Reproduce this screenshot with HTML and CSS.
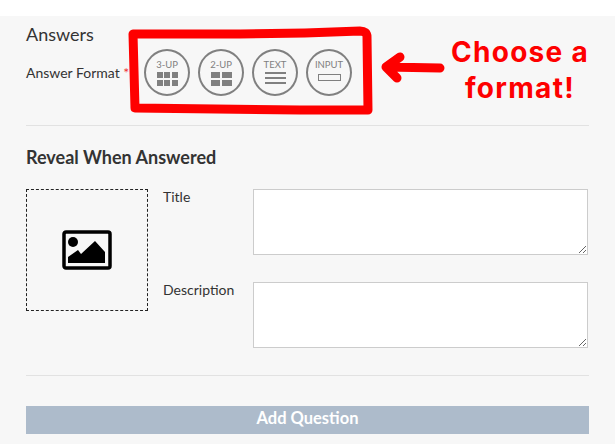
FILE: index.html
```html
<!DOCTYPE html>
<html>
<head>
  <title>Reveal When Answered</title>
  <link rel="stylesheet" href="styles.css">
</head>
<body>
  <div class="form">
    <h2 class="titulo-answers">Answers</h2>
    <div class="linha-formato">
      <label class="label-formato">Answer Format <span class="obrigatorio">*</span></label>
      <div class="formatos">
        <div class="formato">
          <span>3-UP</span>
          <div class="blocos tres"><i></i><i></i><i></i><i></i><i></i><i></i></div>
        </div>
        <div class="formato">
          <span>2-UP</span>
          <div class="blocos dois"><i></i><i></i><i></i><i></i></div>
        </div>
        <div class="formato">
          <span>TEXT</span>
          <div class="linhas"><i></i><i></i><i></i></div>
        </div>
        <div class="formato">
          <span>INPUT</span>
          <div class="campo"></div>
        </div>
      </div>
    </div>

    <hr class="divisor">

    <h3 class="titulo-reveal">Reveal When Answered</h3>
    <div class="reveal">
      <div class="caixa-imagem">
        <svg width="50" height="40" viewBox="0 0 50 40">
          <rect x="2" y="2" width="46" height="36" rx="2" fill="none" stroke="#000" stroke-width="3.5"/>
          <circle cx="11" cy="12" r="5"/>
          <polygon points="6,33 6,27 16,20 19,24 33,11 43,22 43,33"/>
        </svg>
      </div>
      <div class="campos">
        <label>Title</label>
        <textarea></textarea>
        <label>Description</label>
        <textarea></textarea>
      </div>
    </div>

    <hr class="divisor segundo">

    <button class="botao-add">Add Question</button>
  </div>

  <!-- Anotacao em vermelho por cima da tela -->
  <svg class="anotacao" width="615" height="444" viewBox="0 0 615 444">
    <path d="M133 34 L240 34 L305 33 L360 31 Q367 31 367 37 L368 110 L300 110 L135 108 Z" fill="none" stroke="#fe0000" stroke-width="9" stroke-linejoin="round"/>
    <path d="M440 68 L386 67 M400 57 L386 67 L397 78" fill="none" stroke="#fe0000" stroke-width="9" stroke-linecap="round" stroke-linejoin="round"/>
  </svg>
  <div class="aviso">Choose a<br>format!</div>
</body>
</html>
```

FILE: styles.css
```css
* {
  box-sizing: border-box;
}

body {
  margin: 0;
  padding-top: 16px;
  background-color: #fff;
  color: #333;
  font-family: Lato, Arial, sans-serif;
}

.form {
  height: 428px;
  padding: 0 26px;
  background-color: #f7f7f7;
  overflow: hidden;
}

.titulo-answers {
  margin: 8px 0 0;
  font-size: 18px;
  line-height: 20px;
  font-weight: 400;
}

.linha-formato {
  display: flex;
  align-items: center;
  margin-top: 5px;
}

.label-formato {
  width: 118px;
  font-size: 14px;
  white-space: nowrap;
}

.obrigatorio {
  color: #e33;
}

.formatos {
  display: flex;
  gap: 8px;
}

.formato {
  display: flex;
  flex-direction: column;
  align-items: center;
  width: 46px;
  height: 47px;
  padding-top: 9px;
  border: 2px solid #808080;
  border-radius: 50%;
  color: #808080;
  font-size: 9.5px;
  line-height: 10px;
}

.blocos {
  display: grid;
  gap: 1.5px;
  width: 21px;
  margin-top: 2px;
}

.blocos i {
  height: 6px;
  background-color: #808080;
}

.blocos.tres {
  grid-template-columns: repeat(3, 1fr);
}

.blocos.dois {
  grid-template-columns: repeat(2, 1fr);
}

.linhas {
  width: 21px;
  margin-top: 2px;
}

.linhas i {
  display: block;
  height: 2px;
  margin-bottom: 3px;
  background-color: #808080;
}

.campo {
  width: 23px;
  height: 7px;
  margin-top: 4px;
  border: 1.5px solid #808080;
}

.divisor {
  height: 1px;
  margin: 29px 0 0;
  border: none;
  background-color: #e2e2e2;
}

.divisor.segundo {
  margin-top: 27px;
}

.titulo-reveal {
  margin: 21px 0 0;
  font-size: 18px;
  line-height: 20px;
  font-weight: 700;
}

.reveal {
  display: flex;
  margin-top: 22px;
}

.caixa-imagem {
  display: flex;
  align-items: center;
  justify-content: center;
  width: 122px;
  height: 122px;
  border: 1px dashed #222;
}

.campos {
  display: grid;
  grid-template-columns: 90px 335px;
  row-gap: 27px;
  margin-left: 15px;
  font-size: 14px;
}

.campos label {
  line-height: 16px;
}

.campos textarea {
  display: block;
  width: 335px;
  height: 66px;
  margin: 0;
  border: 1px solid #ccc;
  background-color: #fff;
}

.botao-add {
  display: block;
  width: 100%;
  height: 28px;
  margin-top: 30px;
  padding: 0 0 4px;
  border: none;
  background-color: #adbbcb;
  color: #fff;
  font-family: Lato, Arial, sans-serif;
  font-size: 16.5px;
  font-weight: 700;
}

.anotacao {
  position: absolute;
  top: 0;
  left: 0;
}

.aviso {
  position: absolute;
  top: 34px;
  left: 447px;
  width: 146px;
  color: #fe0000;
  font-family: Inter, Arial, sans-serif;
  font-size: 28px;
  line-height: 36px;
  font-weight: 700;
  letter-spacing: 1.3px;
  text-align: center;
  white-space: nowrap;
}
```
